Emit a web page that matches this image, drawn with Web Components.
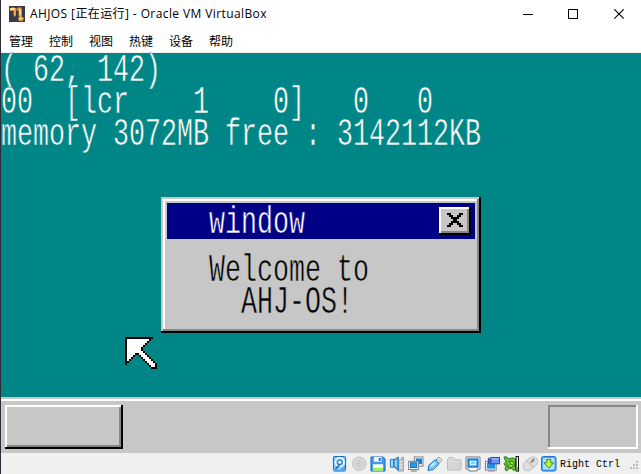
<!DOCTYPE html>
<html lang="zh"><head><meta charset="utf-8"><title>AHJOS</title>
<style>
html,body{margin:0;width:641px;height:474px;overflow:hidden;background:#fff}
</style></head><body>
<vm-app></vm-app>
<script>
const define=(name,css,html,init)=>customElements.define(name,class extends HTMLElement{
  constructor(){super();const r=this.attachShadow({mode:'open'});r.innerHTML='<style>*{box-sizing:border-box}'+css+'</style>'+html;}
  connectedCallback(){if(init)init(this,this.shadowRoot);}
});

const ART={
 close:["OOOOOOOOOOOOOOO@","OQQQQQQQQQQQQQ$@","OQQQQQQQQQQQQQ$@","OQQQ@@QQQQ@@QQ$@","OQQQQ@@QQ@@QQQ$@","OQQQQQ@@@@QQQQ$@","OQQQQQQ@@QQQQQ$@","OQQQQQ@@@@QQQQ$@","OQQQQ@@QQ@@QQQ$@","OQQQ@@QQQQ@@QQ$@","OQQQQQQQQQQQQQ$@","OQQQQQQQQQQQQQ$@","O$$$$$$$$$$$$$$@","@@@@@@@@@@@@@@@@"],
 cursor:["@@@@@@@@@@@@@@..","@OOOOOOOOOOO@...","@OOOOOOOOOO@....","@OOOOOOOOO@.....","@OOOOOOOO@......","@OOOOOOO@.......","@OOOOOOO@.......","@OOOOOOOO@......","@OOOO@@OOO@.....","@OOO@..@OOO@....","@OO@....@OOO@...","@O@......@OOO@..","@@........@OOO@.","@..........@OOO@","............@OO@",".............@@@"]};
define('pixel-art',':host{display:block;line-height:0}','',(el,r)=>{
  const a=ART[el.getAttribute('name')],c={O:'#fff',Q:'#c7c7c7','$':'#868686','@':'#000'};let s='';
  a.forEach((row,y)=>[...row].forEach((p,x)=>{if(c[p])s+=`<rect x="${x}" y="${y}" width="1" height="1" fill="${c[p]}"/>`}));
  r.innerHTML+=`<svg width="${a[0].length*2}" height="${a.length*2}" viewBox="0 0 ${a[0].length} ${a.length}" shape-rendering="crispEdges">${s}</svg>`;
});

/* Guest console font: 16px cells on 32px lines, strokes thinned with the backdrop colour */
define('console-text',`:host{display:block}
div{font:26.66px/21.918px "Liberation Mono",monospace;white-space:pre;transform:scaleY(1.46);transform-origin:0 0;padding-top:1.9px;font-kerning:none;font-variant-ligatures:none;-webkit-text-stroke:.4px var(--backdrop)}`,'<div><slot></slot></div>');

define('title-bar',`:host{display:flex;height:30px;background:#fff;align-items:flex-start;font:12px/16px "Open Sans","Noto Sans CJK SC",sans-serif;color:#000}
.logo{margin:6px 0 0 8px}.t{margin:6px 0 0 5px;height:16px;white-space:nowrap;flex:1;letter-spacing:.4px}
.b{display:flex;gap:35px;margin:9px 17px 0 0}svg{display:block}`,
`<svg class="logo" width="16" height="16" viewBox="0 0 16 16"><rect width="16" height="16" fill="#343b4c"/><path d="M1 2.400Q4 .5 7 2.200V9L6 11 4.500 9V4.500L1 5Z" fill="#f0a040"/><path d="M1 2.400Q4 1 6 2.500L5 4 1 4Z" fill="#ffe0a0"/><path d="M8 2Q13 0 13 4V11L10.500 12 9.500 9.500V5L7 4Z" fill="#e88820"/><path d="M10 3Q12 2 12 5V9L10.500 10Z" fill="#ffd486"/><path d="M9 12L12 10.500 15 12 13.500 15 10 15Z" fill="#f7a83c"/><path d="M11 11L12 13" stroke="#fff0b0"/></svg>
<div class="t"><slot></slot></div>
<div class="b"><svg width="10" height="10"><path d="M0 5.500H10" stroke="#000"/></svg><svg width="10" height="10"><rect x=".5" y=".5" width="9" height="9" fill="none" stroke="#000"/></svg><svg width="11" height="11" style="margin-left:1px"><path d="M.3 .3L9.700 9.700M9.700 .3L.3 9.700" stroke="#000" stroke-width="1.100"/></svg></div>`);

define('menu-bar',`:host{display:flex;gap:16px;height:23px;padding:3px 0 0 8px;background:#fff;border-bottom:1px solid #f0f0f0;font:12px/16px "Noto Sans CJK SC",sans-serif;color:#000}`,'<slot></slot>');
define('menu-item',':host{display:block;height:16px;width:24px;white-space:nowrap}','<slot></slot>');

define('guest-window',`:host{position:absolute;left:160px;top:144px;width:320px;height:136px;display:block;
background:#c7c7c7;box-shadow:inset -2px -2px #000,inset 2px 2px #c7c7c7,inset -4px -4px #868686,inset 4px 4px #fff;padding:6px;color:#000;--backdrop:#c7c7c7}
.h{height:36px;background:#000087;color:#fff;--backdrop:#000087;display:flex;justify-content:space-between;padding:4px 4px 0 42px}
.h console-text{margin-top:-2px;height:32px}.c{padding:14px 0 0 42px}`,
`<div class="h"><console-text><slot name="title"></slot></console-text><pixel-art name="close"></pixel-art></div><div class="c"><console-text><slot></slot></console-text></div>`);

define('guest-task',`:host{height:56px;background:#c7c7c7;display:flex;justify-content:space-between;padding:8px 4px 0 4px;box-shadow:inset 0 2px #c7c7c7,inset 0 4px #fff}
.s{width:118px;height:44px;background:linear-gradient(#fff,#fff) 0 0/116px 2px no-repeat,linear-gradient(#fff,#fff) 0 0/2px 42px no-repeat,linear-gradient(#868686,#868686) 114px 2px/2px 40px no-repeat,linear-gradient(#868686,#868686) 2px 40px/114px 2px no-repeat;box-shadow:inset -2px -2px #000}
.r{width:90px;height:44px;box-shadow:inset -2px -2px #fff,inset 2px 2px #868686}`,'<div class="s"></div><div class="r"></div>');

define('guest-screen',`:host{display:flex;flex-direction:column;position:relative;height:400px;background:#008686;color:#fff;--backdrop:#008686}
.d{flex:1}.cur{position:absolute;left:124px;top:284px}`,
`<div class="d"><console-text>( 62, 142)
00  [lcr    1    0]   0   0
memory 3072MB free : 3142112KB</console-text></div>
<guest-task></guest-task>
<guest-window><span slot="title">window</span>Welcome to
  AHJ-OS!</guest-window>
<pixel-art class="cur" name="cursor"></pixel-art>`);

const ICONS={
 disk:'<path d="M2 .5H13Q14 .5 14 2V14Q14 15.500 13 15.500H3Q1.500 15.500 1.500 14V2Q1.500 .5 3 .5Z" fill="#7fccff" stroke="#1468c0"/><circle cx="8" cy="6.500" r="4.300" fill="#2f8ee0" stroke="#fff" stroke-width="1.800"/><circle cx="8" cy="6.500" r="1.500" fill="#fff"/><path d="M3.500 13.500L8 9" stroke="#1468c0" stroke-width="1.600"/><path d="M9 13.500H12.500V10" fill="none" stroke="#2b8be0"/>',
 cd:'<circle cx="8.500" cy="8" r="7" fill="#d9d9d9" stroke="#bcbcbc"/><circle cx="8.500" cy="8" r="4.500" fill="#d2d2d2"/><circle cx="8.500" cy="8" r="2" fill="#f2f2f2" stroke="#c0c0c0"/><circle cx="8.500" cy="8" r=".7" fill="#999"/>',
 floppy:'<path d="M1 1H13.500L15.500 3V15.500H1Z" fill="#3d9bee" stroke="#1666c3"/><rect x="4" y="1" width="8" height="5" fill="#e9f5ff"/><rect x="9" y="2" width="2" height="3" fill="#1767c1"/><rect x="3" y="8.500" width="10.500" height="6.500" fill="#fff"/><path d="M3 13.500H13.500" stroke="#a4ee4a" stroke-width="3"/>',
 audio:'<path d="M9 4H13V1.500H15V15.500H9Z" fill="#c4c4c4" stroke="#a0a0a0"/><path d="M11 5.500H14M11 8.500H14M11 11.500H14" stroke="#f2f2f2"/><path d="M1.500 3.500H5V11.500H1.500Z" fill="#a9dcff" stroke="#2376bf"/><path d="M5 4L9.500 1V14.500L5 11Z" fill="#5cb8f8" stroke="#1767b1"/><path d="M7 4.500V10.500" stroke="#c8ebff"/>',
 net:'<rect x="6.500" y="1" width="9" height="9.500" fill="#fff" stroke="#7d7d7d"/><rect x="8" y="2.500" width="6.500" height="6" fill="#1880d8"/><path d="M3 15.500H9" stroke="#777"/><rect x=".7" y="5.500" width="10" height="8.500" fill="#fff" stroke="#7d7d7d"/><rect x="2.500" y="7" width="6.500" height="5" fill="#229bea" stroke="#1569b8"/>',
 usb:'<path d="M9 4.500L12 1 15.500 4.500 12 8Z" fill="#fff" stroke="#808080"/><path d="M1 15L2 9.500 7.500 4.500Q9 3.500 11 5.500T11.500 9L6.500 14Z" fill="#72c8ff" stroke="#1a6fc4"/><path d="M4 11L8 7" stroke="#d2f0ff" stroke-width="2"/><path d="M11.500 3.500L13 5" stroke="#777"/>',
 folder:'<path d="M1.500 14.500V4L3 1.500H7.500L9 4H15.500V14.500Z" fill="#d6d6d6" stroke="#bcbcbc"/><path d="M2.500 5.500H14.500" stroke="#e2e2e2"/>',
 display:'<path d="M1 1H15.500V13.500H12.500V15.500H4V13.500H1Z" fill="#fff" stroke="#747474"/><rect x="3" y="3" width="10.500" height="8.500" fill="#2ca4f2" stroke="#1264bc"/><rect x="5.500" y="5.500" width="5.500" height="3.500" fill="#7bd0ff" stroke="#fff"/>',
 record:'<rect x="1.500" y="5.500" width="11" height="9" fill="#fff" stroke="#747474"/><rect x="3" y="7" width="8.500" height="6" fill="#1e93e6"/><path d="M4 15.500H11" stroke="#888"/><rect x="7" y="1.500" width="9" height="6.500" fill="#6d94ec" stroke="#2445a8"/><path d="M7 4L4.500 2V8L7 6Z" fill="#426ad2" stroke="#2445a8"/><path d="M8 3H15" stroke="#a8c3ff"/>',
 cpu:'<path d="M1 1H4L6 3Q9 1 13 3V14L11 15 9 13H6L4 15.500 2 14 3 11 1 8 3 6Z" fill="#62c62e" stroke="#21731a"/><path d="M4 8L7 5 11 6 12 10 8 12 5 11Z" fill="#94e648" stroke="#27781b"/><path d="M7 5V8L5 11M7 8L12 10" fill="none" stroke="#2b8320"/><rect x="13" y="0" width="3.500" height="16" fill="#000"/><rect x="14" y="1" width="1.500" height="14" fill="#fff"/><rect x="14" y="11" width="1.500" height="4" fill="#6ed52c"/>',
 mouse:'<path d="M2 14Q-.5 10 4 5L8 2Q13 -.5 15.500 3T13 11L8 15Q4 16 2 14Z" fill="#dedede" stroke="#bebebe"/><path d="M4.500 5L8 7.500 12 12M8 7.500L12 2" fill="none" stroke="#b4b4b4"/><ellipse cx="11" cy="5" rx="1.200" ry="2.500" transform="rotate(45 11 5)" fill="#8d8d8d"/>',
 arrow:'<rect x=".5" y=".5" width="15" height="15" rx="2" fill="#4ba9f4" stroke="#1b70c6"/><rect x="2" y="2" width="12" height="12" rx="1" fill="#a9e0ff"/><path d="M6 3.500H10V7H13L8 12.500 3 7H6Z" fill="#c5f63a" stroke="#418414"/>'
};
define('status-icon',':host{display:block;width:16px;height:16px;line-height:0}','',(el,r)=>{r.innerHTML+=`<svg width="16" height="16" viewBox="0 0 16.500 16.500">${ICONS[el.getAttribute('name')]}</svg>`});
define('status-bar',`:host{display:flex;height:21px;background:#f0f0f0;padding:3px 3px 0 331px;color:#000}
.i{display:flex;gap:3px}.t{font:10px/12px "Liberation Mono",monospace;transform:scaleY(1.15);margin:3px 0 0 3px;height:12px;width:60px;white-space:pre}
.g{margin:5px 0 0 auto}`,
'<div class="i">'+Object.keys(ICONS).map(k=>`<status-icon name="${k}"></status-icon>`).join('')+`</div><div class="t"><slot></slot></div><svg class="g" width="9" height="10"><path d="M6 0H8V2H6ZM3 3H5V5H3ZM6 3H8V5H6ZM0 6H2V8H0ZM3 6H5V8H3ZM6 6H8V8H6Z" fill="#bdbdbd"/></svg>`);

define('vm-app',':host{display:flex;flex-direction:column;width:641px;height:474px;border-left:1px solid #2b2b33}',
`<title-bar>AHJOS [正在运行] - Oracle VM VirtualBox</title-bar>
<menu-bar><menu-item>管理</menu-item><menu-item>控制</menu-item><menu-item>视图</menu-item><menu-item>热键</menu-item><menu-item>设备</menu-item><menu-item>帮助</menu-item></menu-bar>
<guest-screen></guest-screen><status-bar>Right Ctrl</status-bar>`);
</script></body></html>
